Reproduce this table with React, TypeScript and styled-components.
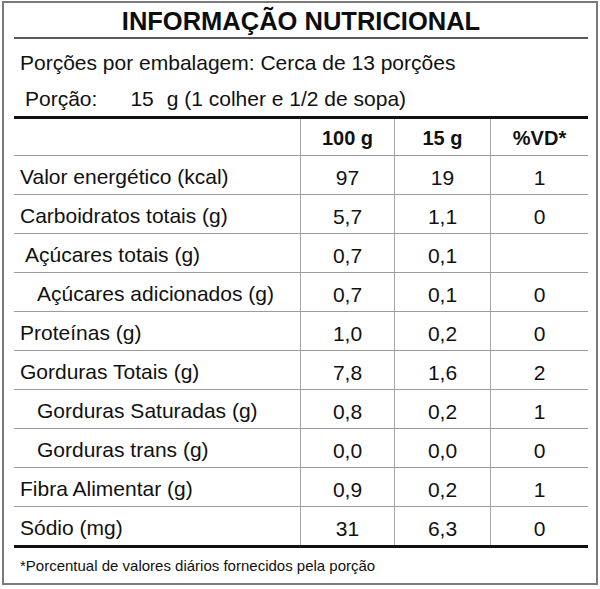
import React from 'react'
import styled, { createGlobalStyle } from 'styled-components'

const GlobalStyle = createGlobalStyle`
  html, body {
    margin: 0;
    padding: 0;
    background: #ffffff;
  }
  body {
    font-family: "Liberation Sans", Arial, sans-serif;
    color: #111111;
  }
`

interface Nutrient {
  label: string,
  per100: string,
  perPortion: string,
  vd: string,
  indent?: 0 | 1 | 2,
}

const nutrients: Nutrient[] = [
  { label: 'Valor energético (kcal)', per100: '97', perPortion: '19', vd: '1' },
  { label: 'Carboidratos totais (g)', per100: '5,7', perPortion: '1,1', vd: '0' },
  { label: 'Açúcares totais (g)', per100: '0,7', perPortion: '0,1', vd: '', indent: 1 },
  { label: 'Açúcares adicionados (g)', per100: '0,7', perPortion: '0,1', vd: '0', indent: 2 },
  { label: 'Proteínas (g)', per100: '1,0', perPortion: '0,2', vd: '0' },
  { label: 'Gorduras Totais (g)', per100: '7,8', perPortion: '1,6', vd: '2' },
  { label: 'Gorduras Saturadas (g)', per100: '0,8', perPortion: '0,2', vd: '1', indent: 2 },
  { label: 'Gorduras trans (g)', per100: '0,0', perPortion: '0,0', vd: '0', indent: 2 },
  { label: 'Fibra Alimentar (g)', per100: '0,9', perPortion: '0,2', vd: '1' },
  { label: 'Sódio (mg)', per100: '31', perPortion: '6,3', vd: '0' },
]

const indentPx = [6, 11, 23]

const App: React.FC = () => {
  return (
    <>
      <GlobalStyle />
      <StyledFrame>
        <StyledTitle>INFORMAÇÃO NUTRICIONAL</StyledTitle>
        <StyledInfo>
          <StyledInfoLine>Porções por embalagem: Cerca de 13 porções</StyledInfoLine>
          <StyledInfoLine $indent={11}>
            <span>Porção:</span>
            <StyledGap $width={33} />
            <span>15</span>
            <StyledGap $width={13} />
            <span>g (1 colher e 1/2 de sopa)</span>
          </StyledInfoLine>
        </StyledInfo>
        <StyledTable>
          <StyledHeaderRow>
            <StyledLabelCell $indent={6} />
            <StyledHeadCell>100 g</StyledHeadCell>
            <StyledHeadCell>15 g</StyledHeadCell>
            <StyledHeadCell>%VD*</StyledHeadCell>
          </StyledHeaderRow>
          {nutrients.map((n, i) => (
            <StyledRow key={n.label} $last={i === nutrients.length - 1}>
              <StyledLabelCell $indent={indentPx[n.indent ?? 0]}>{n.label}</StyledLabelCell>
              <StyledValueCell>{n.per100}</StyledValueCell>
              <StyledValueCell>{n.perPortion}</StyledValueCell>
              <StyledValueCell>{n.vd}</StyledValueCell>
            </StyledRow>
          ))}
        </StyledTable>
        <StyledFootnote>*Porcentual de valores diários fornecidos pela porção</StyledFootnote>
      </StyledFrame>
    </>
  )
}

const StyledFrame = styled.div`
  box-sizing: border-box;
  width: 596px;
  margin: 1px 0 0 2px;
  border: 2px solid #7a7a7a;
  padding: 0 8px 0 10px;
`

const StyledTitle = styled.div`
  box-sizing: border-box;
  height: 36px;
  padding-top: 2px;
  display: flex;
  align-items: center;
  justify-content: center;
  border-bottom: 2px solid #5a5a5a;
  font-size: 25.5px;
  font-weight: 700;
  color: #0d0d0d;
`

const StyledInfo = styled.div`
  padding-top: 5px;
`

const StyledInfoLine = styled.div<{ $indent?: number }>`
  box-sizing: border-box;
  height: 36px;
  padding-top: 2px;
  display: flex;
  align-items: center;
  padding-left: ${props => props.$indent ?? 6}px;
  font-size: 21px;
  white-space: pre;
`

const StyledGap = styled.span<{ $width: number }>`
  display: inline-block;
  width: ${props => props.$width}px;
`

const StyledTable = styled.div`
  border-top: 3px solid #111111;
`

const StyledRow = styled.div<{ $last?: boolean }>`
  box-sizing: border-box;
  display: grid;
  grid-template-columns: 286px 94px 96px 1fr;
  height: ${props => (props.$last ? 41 : 39)}px;
  border-bottom: ${props => (props.$last ? '3px solid #111111' : '1px solid #9c9c9c')};
`

const StyledHeaderRow = styled(StyledRow)`
  height: 37px;
`

const StyledLabelCell = styled.div<{ $indent: number }>`
  box-sizing: border-box;
  display: flex;
  align-items: center;
  padding: 4px 0 0 ${props => props.$indent}px;
  font-size: 21px;
  white-space: nowrap;
`

const StyledValueCell = styled.div`
  box-sizing: border-box;
  display: flex;
  align-items: center;
  justify-content: center;
  padding-top: 5px;
  border-left: 1px solid #a8a8a8;
  font-size: 21px;
`

const StyledHeadCell = styled(StyledValueCell)`
  padding-top: 3px;
  font-size: 20px;
  font-weight: 700;
`

const StyledFootnote = styled.div`
  height: 35px;
  display: flex;
  align-items: center;
  padding-left: 6px;
  font-size: 15px;
`

export default App
